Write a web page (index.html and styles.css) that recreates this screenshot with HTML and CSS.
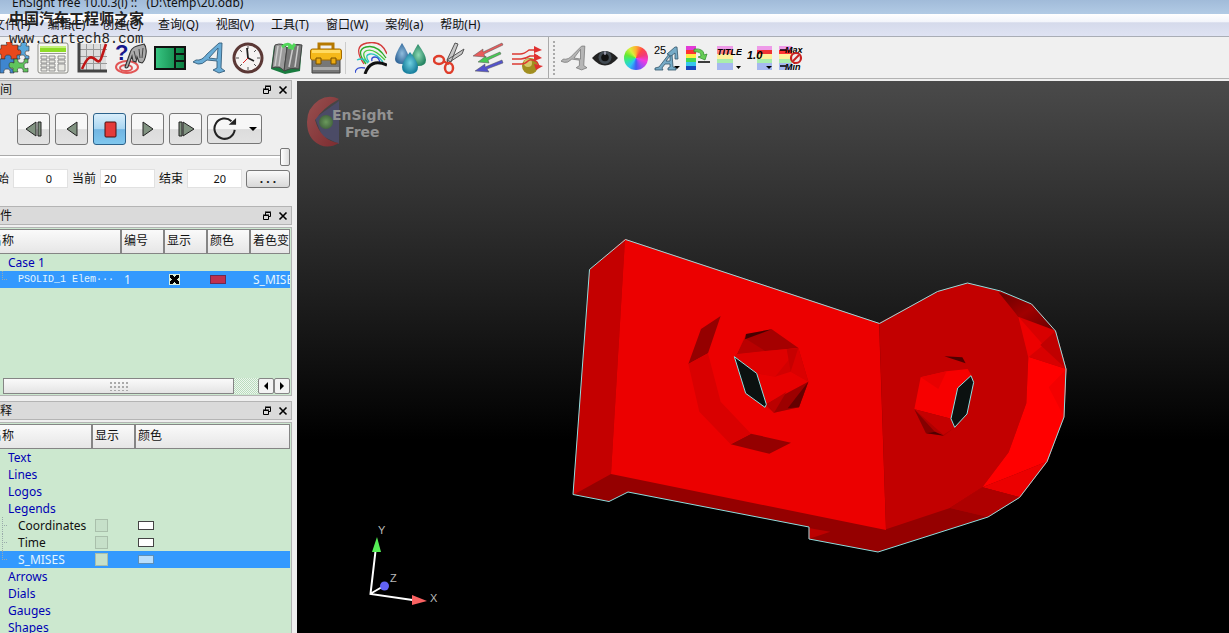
FILE: index.html
```html
<!DOCTYPE html>
<html lang="zh-CN">
<head>
<meta charset="utf-8">
<title>EnSight free 10.0.3(i)</title>
<link rel="stylesheet" href="styles.css">
</head>
<body>
<div class="app">
  <header class="titlebar">EnSight free 10.0.3(i) ::&nbsp;&nbsp; (D:\temp\20.odb)</header>
  <nav class="menubar">
    <button>文件(F)</button><button>编辑(E)</button><button>创建(C)</button><button>查询(Q)</button><button>视图(V)</button><button>工具(T)</button><button>窗口(W)</button><button>案例(a)</button><button>帮助(H)</button>
  </nav>
  <div class="toolbar">
    <div class="tools">
      <button aria-label="Parts"><svg viewBox="0 0 32 32"><g stroke="#333" stroke-width=".6"><path fill="#e8481c" d="M3 3h6q-2-4 2-4t3 4h6v5q4-2 4 2t-4 3v4h-5q2 4-2 4t-3-4H3v-5q-4 2-4-2t4-3z"/><path fill="#58a8dc" d="M20 4h3q-1-4 3-4t2 4h3v5q-4-1-4 2t4 3v3h-4q1-4-3-4t-2 4h-3v-4q4 1 4-2.500t-3-2.500z"/><path fill="#3f86cf" d="M2 17h5q-1-4 3-4t3 4h3v4q-4-1-4 3t4 3v4h-4q1-4-3-4t-3 4H2z"/><path fill="#5fc45c" d="M16 17h4q-1 4 3 4t3-4h4v4q-4-1-4 3t4 2v4h-5q1-4-3-4t-2 4h-5v-4q-4 1-4-3t5-2z"/></g></svg></button>
      <button aria-label="Calculator"><svg viewBox="0 0 32 32"><rect x="1" y="1" width="30" height="30" rx="2" fill="#f6f6f2" stroke="#8b8b86"/><path fill="#8fdc28" d="M3 4h26v6H3z"/><path fill="#c5f07c" d="M3 4h26v2H3z"/><path stroke="#999" d="M3 11.500h26"/><g fill="#e8e8e2" stroke="#888" stroke-width=".9"><path d="M4 14h6v3H4zM4 18h6v3H4zM4 22h6v3H4zM4 26h6v3H4zM12 14h6v3h-6zM12 18h6v3h-6zM12 22h6v3h-6zM12 26h6v3h-6zM21 14h7v3h-7zM21 18h7v3h-7zM21 22h7v7h-7z"/></g></svg></button>
      <button aria-label="Plot"><svg viewBox="0 0 32 32"><path fill="#ddd" d="M4 2h26v26H4z"/><path stroke="#999" d="M10.500 2v26M17.500 2v26M24.500 2v26M4 7.500h27M4 14.500h27M4 21.500h27"/><path fill="none" stroke="#444" stroke-width="3" d="M3 1v28h28"/><path fill="none" stroke="#c01515" stroke-width="2.600" d="M6 27q4-9 7-11t7 2 6-4l4-12"/></svg></button>
      <button aria-label="Query"><svg viewBox="0 0 32 32"><g fill="none" stroke="#e25555" stroke-width="2"><ellipse cx="12" cy="25" rx="11" ry="6"/><ellipse cx="11" cy="26" rx="6" ry="3"/></g><text x="0" y="18" class="glyph-query">?</text><path fill="#aaa" stroke="#333" stroke-width="1.100" d="M10 25l5-14q1-5 7-7l7-2q3 3 2 10t-4 9l-3-1-2-5-1 5-3-1-1-5-4 11q-2 2-3 0z"/><path fill="none" stroke="#444" d="M19 9l2 8M24 7l1 9M28 6l-1 10"/></svg></button>
      <button aria-label="Viewports"><svg viewBox="0 0 32 32"><defs><linearGradient id="gv"><stop stop-color="#39c784"/><stop offset="1" stop-color="#087a3d"/></linearGradient></defs><rect x="1" y="5" width="30" height="22" fill="url(#gv)" stroke="#111" stroke-width="2"/><path stroke="#111" stroke-width="2" d="M21 5v22M21 12h10M21 19h10"/></svg></button>
      <button aria-label="Annotation"><svg viewBox="0 0 32 32"><path fill="#69acd6" fill-rule="evenodd" stroke="#345d7c" stroke-width=".9" d="M0 20l3-2q6 1 11-6L26 1h3l-1 25 4 3-6 2-6-3 4-2v-7l-10-1q-5 5-9 4zM16 16l8 1 1-11z"/></svg></button>
      <button aria-label="Time"><svg viewBox="0 0 32 32"><circle cx="16" cy="16" r="14" fill="#f6f3f2" stroke="#5b3836" stroke-width="3"/><g stroke="#555"><path d="M16 4v3M16 25v3M4 16h3M25 16h3M8 8l2 2M22 22l2 2M24 8l-2 2M8 24l2-2"/></g><path fill="none" stroke="#222" stroke-width="1.800" d="M15 6l1 10 6 3"/><path stroke="#d22" d="M16 16l-5 5"/></svg></button>
      <button aria-label="Book"><svg viewBox="0 0 32 32"><path fill="#197b3f" d="M0 27l3-23 13 2 15-3-2 26-15 3z"/><path fill="#999" stroke="#444" d="M4 3q8-3 12 3l-3 23Q9 23 1 26z"/><path fill="#777" stroke="#444" d="M16 6q7-5 15-3l-3 24q-8-2-15 2z"/><path stroke="#ccc" stroke-width="1.500" d="M7 4L4 24M11 4L8 24M22 5l-4 20M27 4l-3 21"/><path fill="none" stroke="#51d659" stroke-width="3" d="M11 5q7-6 10 1l-4-1m4 1l3-4"/></svg></button>
      <button aria-label="Toolbox"><svg viewBox="0 0 32 32"><path fill="none" stroke="#b67900" stroke-width="3" d="M9 8V2h14v6"/><path fill="#777" stroke="#444" d="M2 17h28v14H2z"/><path fill="#aaa" d="M3 25h26v3H3z"/><rect x=".5" y="7" width="31" height="11" rx="2" fill="#f5b91a" stroke="#a46b00"/><path fill="#ffda62" d="M2 8h28v3H2z"/><path fill="#ecaa11" stroke="#765000" d="M6 16h5v6H6zM21 16h5v6h-5z"/></svg></button>
      <i class="separator"></i>
      <button aria-label="Contours"><svg viewBox="0 0 32 32"><g fill="none" stroke-width="1.300"><path stroke="#d43a3a" d="M9 22Q-3 4 12 1t20 11"/><path stroke="#29a929" d="M11 22Q0 8 11 5t20 11"/><path stroke="#49ca3e" d="M13 21Q5 11 12 8.500T30 18"/><path stroke="#28c4bf" d="M14 20Q9 13 15 12t13 8M2 18q6-3 11 3"/><path stroke="#334cd0" d="M17 19q-1-4 3-4t5 6M0 31q1-7 10-5"/><path stroke="#111" stroke-width="3" d="M10 32q5-16 22-9"/></g></svg></button>
      <button aria-label="Isosurfaces"><svg viewBox="0 0 32 32"><defs><radialGradient id="d1"><stop stop-color="#90bddd"/><stop offset="1" stop-color="#356a9c"/></radialGradient><radialGradient id="d2"><stop stop-color="#8cd9b3"/><stop offset="1" stop-color="#268563"/></radialGradient><radialGradient id="d3"><stop stop-color="#70d0e0"/><stop offset="1" stop-color="#187f9d"/></radialGradient></defs><path fill="url(#d1)" d="M8 1q7 11 7 16 0 5-7 5t-7-5Q1 12 8 1z"/><path fill="url(#d2)" d="M24 2q8 11 8 16 0 6-8 6t-7-6q0-5 7-16z"/><path fill="url(#d3)" d="M16 10q8 10 8 15 0 7-8 7t-8-7q0-5 8-15z"/></svg></button>
      <button aria-label="Clip"><svg viewBox="0 0 32 32"><path fill="#c7c7c7" stroke="#555" d="M14 18L22 1l3 1-7 18zM14 18l17-11-2 5-14 9z"/><g fill="none" stroke="#df3d2b" stroke-width="2.500"><ellipse cx="6" cy="18" rx="5" ry="4"/><ellipse cx="16" cy="26" rx="4" ry="5"/><path d="M10 19l6 3"/></g></svg></button>
      <button aria-label="Vectors"><svg viewBox="0 0 32 32"><g stroke="#555" stroke-width=".5"><path fill="#e75c5c" d="M1 14l10-7v3L30 1l1 2-19 9 1 3z"/><path fill="#48c955" d="M6 20l8-6v2l14-6 1 2-13 6 1 3z"/><path fill="#5353cb" d="M3 29l10-7v3l17-7 1 3-16 6 2 3z"/></g></svg></button>
      <button aria-label="Particle traces"><svg viewBox="0 0 32 32"><circle cx="19" cy="24" r="8" fill="#a18e20"/><circle cx="17" cy="21" r="4" fill="#d4c86a"/><g fill="none" stroke="#dc3a32" stroke-width="1.500"><path d="M1 12h8q4 0 9-4h9M1 17h9q4 0 9-3h8M1 22h9q4 0 7-3t9 1l2 4"/></g><path fill="#e03030" d="M23 4l8 4-8 3zM23 11l8 5-8 3zM23 22l9 2-7 4z"/></svg></button>
    </div>
    <div class="formats">
      <button aria-label="Text"><svg viewBox="0 0 24 24"><path fill="#b5b5b5" fill-rule="evenodd" stroke="#777" stroke-width=".7" d="M0 15l2-2q5 1 9-4l8-8h3l-1 18 3 2-5 2-5-2 3-2v-5l-7-1q-4 4-7 3zm12-3l6 1V4z"/></svg></button>
      <button aria-label="Visibility"><svg viewBox="0 0 24 24"><path fill="#222" d="M0 12Q12-1 24 12 12 26 0 12z"/><circle cx="12" cy="11.500" r="6" fill="#414a52"/><circle cx="12" cy="11.500" r="3.500" fill="#111"/><path fill="#99a" d="M11 6h2v3h-2z"/></svg></button>
      <button aria-label="Color"><i class="wheel"></i></button>
      <button aria-label="Font size"><svg viewBox="0 0 26 26"><text x="0" y="9" class="glyph-small">25</text><path fill="#76abc7" fill-rule="evenodd" stroke="#34566a" stroke-width=".8" d="M1 25v-2l4-1 10-13h3l1 13 3 1v2h-8v-2l2-1v-3h-5l-3 4 1 2zm11-9h4v-5z"/><path fill="#76abc7" stroke="#34566a" stroke-width=".8" d="M13 9l8-7h2l1 12h-3V8l-4 3z"/><path d="M20 21h6l-3 3z"/></svg></button>
      <button aria-label="Legend move"><svg viewBox="0 0 26 26"><path fill="#e33bd6" d="M1 1h10v4H1z"/><path fill="#f33" d="M1 5h10v4H1z"/><path fill="#ffef42" d="M1 9h10v4H1z"/><path fill="#42d953" d="M1 13h10v4H1z"/><path fill="#36c7ec" d="M1 17h10v4H1z"/><path fill="#1549bd" d="M1 21h10v4H1z"/><path fill="#67cd56" stroke="#2c8a2a" stroke-width=".7" d="M9 4q10-1 10 6l3-1-2 6-7-3 3-1q0-5-7-4z"/><path stroke="#000" stroke-width="1.500" d="M13 17h12"/></svg></button>
      <button aria-label="Legend title"><svg viewBox="0 0 26 26"><path fill="#ee9ae8" d="M1 1h16v4H1z"/><path fill="#ff8585" d="M1 5h16v4H1z"/><path fill="#fff19c" d="M1 9h16v5H1z"/><path fill="#a9edac" d="M1 14h16v4H1z"/><path fill="#a6b8f0" d="M1 18h16v7H1z"/><text x="1" y="10" class="glyph-bold">TITLE</text><path d="M20 21h5l-2.500 3z"/></svg></button>
      <button aria-label="Legend values"><svg viewBox="0 0 26 26"><path fill="#ee9ae8" d="M10 1h15v4H10z"/><path fill="#e33" d="M10 5h15v4H10z"/><path fill="#fff19c" d="M10 9h15v5H10z"/><path fill="#a9edac" d="M10 14h15v4H10z"/><path fill="#a6b8f0" d="M10 18h15v7H10z"/><text x="0" y="14" class="glyph-value">1.0</text><path d="M19 21h6l-3 3z"/></svg></button>
      <button aria-label="Legend range"><svg viewBox="0 0 26 26"><path fill="#ee9ae8" d="M1 1h13v4H1z"/><path fill="#f33" d="M1 5h13v4H1z"/><path fill="#fff19c" d="M1 9h13v5H1z"/><path fill="#a9edac" d="M1 14h13v4H1z"/><path fill="#a6b8f0" d="M1 18h13v7H1z"/><path stroke="#000" stroke-width="1.500" d="M2 5h6M2 21h6"/><text x="7" y="8" class="glyph-range">Max</text><text x="7" y="25" class="glyph-range">Min</text><circle cx="18" cy="13" r="5" fill="#eee" stroke="#c92121" stroke-width="2.200"/><path stroke="#c92121" stroke-width="2" d="M15 16l6-6"/></svg></button>
    </div>
  </div>

  <main class="workspace">
    <aside class="dock">
      <section>
        <h2 class="panel-title"><span>时间</span><button aria-label="Float"><svg viewBox="0 0 10 10"><path fill="none" stroke="#000" d="M3.500 4V1.500h5v4H6M1.500 4.500h5v4h-5zM3 1h6M1 4h6"/></svg></button><button aria-label="Close"><svg viewBox="0 0 10 10"><path stroke="#000" stroke-width="1.600" d="M1.500 1.500l7 7M8.500 1.500l-7 7"/></svg></button></h2>
        <div class="time">
          <div class="player">
            <button aria-label="Step back"><svg viewBox="0 0 18 18"><path fill="#819381" stroke="#222" d="M11 2v14L1 9z"/><path fill="#819381" stroke="#222" d="M13 2h3v14h-3z"/></svg></button>
            <button aria-label="Play back"><svg viewBox="0 0 18 18"><path fill="#819381" stroke="#222" d="M14 2v14L4 9z"/></svg></button>
            <button class="active" aria-label="Stop"><svg viewBox="0 0 18 18"><rect x="4" y="2" width="11" height="15" rx="1" fill="#e43a3a" stroke="#4a1111"/></svg></button>
            <button aria-label="Play"><svg viewBox="0 0 18 18"><path fill="#819381" stroke="#222" d="M4 2v14l10-7z"/></svg></button>
            <button aria-label="Step forward"><svg viewBox="0 0 18 18"><path fill="#819381" stroke="#222" d="M6 2v14l11-7z"/><path fill="#819381" stroke="#222" d="M2 2h3v14H2z"/></svg></button>
            <button class="loop" aria-label="Loop"><svg class="loop-icon" viewBox="0 0 26 26"><path fill="none" stroke="#222" stroke-width="2.200" d="M23.500 14A11 11 0 1 1 20 4.500"/><path fill="#222" d="M17 8.500h8V1z"/></svg><svg class="caret" viewBox="0 0 8 4"><path d="M0 0h8L4 4z"/></svg></button>
          </div>
          <input class="slider" type="range" min="0" max="20" value="20" aria-label="Time step">
          <div class="range">
            <label for="start">开始</label><input id="start" class="right" value="0">
            <label for="current">当前</label><input id="current" value="20">
            <label for="end">结束</label><input id="end" class="right" value="20">
            <button>. . .</button>
          </div>
        </div>
      </section>

      <section>
        <h2 class="panel-title"><span>部件</span><button aria-label="Float"><svg viewBox="0 0 10 10"><path fill="none" stroke="#000" d="M3.500 4V1.500h5v4H6M1.500 4.500h5v4h-5zM3 1h6M1 4h6"/></svg></button><button aria-label="Close"><svg viewBox="0 0 10 10"><path stroke="#000" stroke-width="1.600" d="M1.500 1.500l7 7M8.500 1.500l-7 7"/></svg></button></h2>
        <div class="frame parts">
          <table>
            <colgroup><col class="name-wide"><col class="narrow"><col class="narrow"><col class="narrow"><col></colgroup>
            <thead><tr><th>名称</th><th>编号</th><th>显示</th><th>颜色</th><th>着色变量</th></tr></thead>
            <tbody>
              <tr><td class="group" colspan="5">Case 1</td></tr>
              <tr class="selected"><td class="child last mono">PSOLID_1 Elem···</td><td>1</td><td><input class="check" type="checkbox" checked aria-label="显示 PSOLID_1"></td><td><i class="swatch crimson"></i></td><td>S_MISES</td></tr>
            </tbody>
          </table>
          <div class="scroll">
            <span class="thumb"><i></i></span><span class="trough"></span>
            <button aria-label="Scroll left"><svg viewBox="0 0 6 8"><path d="M5 0v8L1 4z"/></svg></button><button aria-label="Scroll right"><svg viewBox="0 0 6 8"><path d="M1 0v8l4-4z"/></svg></button>
          </div>
        </div>
      </section>

      <section class="annotations">
        <h2 class="panel-title"><span>注释</span><button aria-label="Float"><svg viewBox="0 0 10 10"><path fill="none" stroke="#000" d="M3.500 4V1.500h5v4H6M1.500 4.500h5v4h-5zM3 1h6M1 4h6"/></svg></button><button aria-label="Close"><svg viewBox="0 0 10 10"><path stroke="#000" stroke-width="1.600" d="M1.500 1.500l7 7M8.500 1.500l-7 7"/></svg></button></h2>
        <div class="frame">
          <table>
            <colgroup><col class="name"><col class="narrow"><col></colgroup>
            <thead><tr><th>名称</th><th>显示</th><th>颜色</th></tr></thead>
            <tbody>
              <tr><td class="group" colspan="3">Text</td></tr>
              <tr><td class="group" colspan="3">Lines</td></tr>
              <tr><td class="group" colspan="3">Logos</td></tr>
              <tr><td class="group" colspan="3">Legends</td></tr>
              <tr><td class="child">Coordinates</td><td><input class="check" type="checkbox" aria-label="显示 Coordinates"></td><td><i class="swatch"></i></td></tr>
              <tr><td class="child">Time</td><td><input class="check" type="checkbox" aria-label="显示 Time"></td><td><i class="swatch"></i></td></tr>
              <tr class="selected"><td class="child last">S_MISES</td><td><input class="check" type="checkbox" aria-label="显示 S_MISES"></td><td><i class="swatch sky"></i></td></tr>
              <tr><td class="group" colspan="3">Arrows</td></tr>
              <tr><td class="group" colspan="3">Dials</td></tr>
              <tr><td class="group" colspan="3">Gauges</td></tr>
              <tr><td class="group" colspan="3">Shapes</td></tr>
            </tbody>
          </table>
        </div>
      </section>
    </aside>

    <div class="viewport">
      <svg class="scene" viewBox="297 81 932 552">
        <defs>
          <radialGradient id="ball"><stop stop-color="#6b9a5c"/><stop offset="1" stop-color="#44663f"/></radialGradient>
          <linearGradient id="bowl" x2="1" y2="1"><stop stop-color="#985050"/><stop offset="1" stop-color="#7c2c30"/></linearGradient>
          <linearGradient id="rim" x2="1" y2="1"><stop stop-color="#650000"/><stop offset=".5" stop-color="#a00000"/><stop offset="1" stop-color="#650000"/></linearGradient>
        </defs>
        <g>
          <path fill="#4b4b66" d="M339 101l-24 17 7 18 17 8z"/>
          <path fill="url(#bowl)" d="M339 99q-10-5-20 1-12 8-12 22 0 17 13 23 9 4 19-2-18-2-24-23 8-12 24-21z"/>
          <circle cx="326" cy="122" r="7" fill="url(#ball)"/>
          <text class="brand" x="332" y="120">EnSight</text><text class="brand" x="345" y="137">Free</text>
        </g>
        <path fill="#950000" d="M589.500 269.500L625 239l254 84 59-31.500 30-8.500 33 8 31 13 24 27 10.500 38-2 48-17 44.500-27.500 36L988 517l-110 35-69-13v-12l-181-35-19 9.500-36-7z"/>
        <path fill="#c40000" d="M589.500 269.500L625 239l-14 235-38 21z"/>
        <path fill="#ec0000" d="M625 239l254 84 7 207-275-56z"/>
        <g transform="translate(560 230) scale(.333333)">
          <path fill="#950000" d="M482 258l-59 39-38 105 59-32zM573 611l120 27-65 33-116-28z"/>
          <path fill="#d90000" d="M385 402l59-32 38 145 91 96-61 32-94-98z"/>
          <path fill="#d20000" d="M558 312l77-14 80 56 30 101-28 77-75 16-23-18-29-100-67-50 9-10z"/>
          <path fill="#a50000" d="M555 325l80-27 80 56-183 18z"/>
          <path fill="#b90000" d="M555 325l60 38-83 9z"/>
          <path fill="#460000" d="M558 312l77-14-80 30z"/>
          <path fill="#df0000" d="M615 363l100-9-70 86-58-11-64-49 9-8z"/>
          <path fill="#c60000" d="M680 358l35-4 30 101-53-30z"/>
          <path fill="#da0000" d="M715 354l30 101-53-30z"/>
          <path fill="#e80000" d="M645 440l47-15 53 30-126 68-29-93z"/>
          <path fill="#9c0000" d="M619 523l126-68-28 77-75 16z"/>
          <path fill="#bb0000" d="M619 523l60-37-37 62z"/>
          <path fill="#650000" d="M745 455l-28 77-34 3z"/>
          <path class="hole" d="M523 380l67 50 29 93-4 9-58-42z"/>
        </g>
        <g transform="translate(800 270) scale(.333333)">
          <path fill="#c20000" d="M238 158l175-94 90-26 96 26 56 76 30 118-6 142-53 147-79 105-97 62-192 64z"/>
          <path fill="url(#rim)" d="M595 66l102 37 70 79-112-42z"/>
          <path fill="#d80000" d="M655 140l112 42 32 115-114-37z"/>
          <path fill="#ed0000" d="M655 140l75 85-45 37z"/>
          <path fill="#c00000" d="M767 182l32 115-78-72z"/>
          <path fill="#ff0000" d="M685 260l114 37-7 143-49 134-196 78 79-105 53-147z"/>
          <path fill="#f30000" d="M799 297l-7 143-46-88z"/>
          <path fill="#ec0000" d="M547 652l196-78-83 108z"/>
          <path fill="#ae0000" d="M547 652l113 30-95 59-115-27z"/>
          <path fill="#c20000" d="M547 652l-72 46 90 43z"/>
          <path fill="#ae0000" d="M450 714l97-62 113 30-95 59z"/>
          <path fill="#bd0000" d="M26 774v33l65-22z"/>
          <path fill="#500000" d="M433 259l54 3 10 18z"/>
          <path fill="#f70000" d="M362 322l78-18 63-7 12 20-42 37-18 93-112-29z"/>
          <path fill="#e80000" d="M362 322l78-18-25 53z"/>
          <path fill="#ae0000" d="M343 418l110 28 12 26-33 25-54-7z"/>
          <path fill="#c50000" d="M343 418l110 28 12 26-35 22z"/>
          <path fill="#840000" d="M343 418l62 68-27 4z"/>
          <path fill="#500000" d="M378 490l27-5 27 12z"/>
          <path class="hole" d="M513 317l8 20-20 95-37 40-11-26 20-92z"/>
        </g>
        <path class="outline" d="M589.500 269.500L625.500 239.500l254 84 58-32 30-8.500 33 8 31 13 24 27 10.500 38-2 48-17 44.500-27.500 36L988 517l-110 35-69-13v-12l-181-35-19 9.500-36-7z"/>
        <g class="axes">
          <path d="M375.500 551l-5 43 42 6M370 594l12-7"/>
          <path class="y" d="M377 537l4 15h-9z"/><path class="x" d="M412 595l15 6-15 4z"/><circle cx="384.500" cy="586" r="4.500"/>
          <text x="378" y="534">Y</text><text x="390" y="582">Z</text><text x="430" y="602">X</text>
        </g>
      </svg>
    </div>
  </main>
</div>
<div class="watermark"><p class="club">中国汽车工程师之家</p><p class="site">www.cartech8.com</p></div>
</body>
</html>
```
FILE: styles.css
```css
* { box-sizing: border-box; }
body {
  margin: 0;
  height: 100vh;
  overflow: hidden;
  background: #efefef;
  color: #111;
  font: 12px/17px "Noto Sans", "Noto Sans CJK SC", sans-serif;
}
button, input { font: inherit; color: inherit; }
button { padding: 0; border: 0; background: none; }
svg { display: block; }

/* The window runs past the left edge of the screen. */
.app {
  display: flex;
  flex-direction: column;
  height: 100vh;
  margin-left: -16px;
}
.titlebar {
  flex: none;
  height: 14px;
  padding-left: 28px;
  line-height: 6px;
  white-space: pre;
  background: linear-gradient(#a1bbd9, #b2cbe5);
}
.menubar {
  display: flex;
  flex: none;
  gap: 17px;
  height: 23px;
  padding-left: 9px;
  border-bottom: 1px solid #a9adb5;
  background: linear-gradient(#fff 0, #f3f5fb 35%, #d5daeb 40%, #dfe3f3 100%);
}
.menubar button { height: 21px; }
.toolbar {
  display: flex;
  flex: none;
  height: 42px;
  margin-bottom: 1px;
  border-bottom: 1px solid #b2b2b2;
  background: #f0f0f0;
}
.tools, .formats { display: flex; align-items: center; }
.tools { padding: 0 2px 0 10px; border-right: 1px solid #aaa; }
.tools button { width: 39px; }
.tools svg { width: 32px; height: 32px; margin: auto; }
.separator { width: 6px; height: 32px; border-left: 1px solid #ccc; }
.formats::before {
  content: "";
  width: 2px;
  height: 34px;
  margin: 0 3px 0 4px;
  background: repeating-linear-gradient(#aaa 0 2px, transparent 2px 4px);
}
.formats button { width: 31px; }
.formats svg { width: 26px; height: 26px; margin: auto; }
.wheel {
  display: block;
  width: 24px;
  height: 24px;
  margin: auto;
  border-radius: 50%;
  background: conic-gradient(#ffb02e, #ff4848, #f13a7a, #f13ae0, #a24cf2, #3f5cf4, #2ec4f5, #30e69b, #66ea30, #d8f03c, #ffb02e);
}
.glyph-query { font: bold 22px "Liberation Sans", sans-serif; fill: #17178c; }
.glyph-small { font: 11px "Liberation Sans", sans-serif; }
.glyph-bold { font: italic bold 9px "Liberation Sans", sans-serif; }
.glyph-value { font: italic bold 11px "Liberation Sans", sans-serif; }
.glyph-range { font: italic bold 9px "Liberation Sans", sans-serif; }

.workspace { display: flex; flex: 1; min-height: 0; }
.dock {
  display: flex;
  flex: none;
  flex-direction: column;
  width: 308px;
  margin-right: 5px;
  overflow: hidden;
}
.panel-title {
  display: flex;
  align-items: center;
  gap: 6px;
  height: 19px;
  margin: 0;
  padding: 0 3px;
  border: 1px solid #b4b4b4;
  background: #dadada;
  font-size: 12px;
  font-weight: 400;
}
.panel-title span { flex: 1; }
.panel-title svg { width: 10px; height: 10px; }

.time { height: 107px; padding: 14px 2px 0 0; }
.player { display: flex; align-items: center; gap: 5px; padding-left: 33px; }
.player button {
  display: flex;
  align-items: center;
  justify-content: center;
  width: 33px;
  height: 32px;
  border: 1px solid #777;
  border-radius: 3px;
  background: linear-gradient(#f7f7f7 50%, #dcdcdc 52%, #e2e2e2);
}
.player svg { width: 18px; height: 18px; }
.player .active { border-color: #2c628b; background: linear-gradient(#d9eefb, #a8d5f1 50%, #72b5e2 52%, #7fc7ee); }
.player .loop { gap: 12px; width: 55px; height: 30px; }
.player .loop-icon { width: 24px; height: 24px; }
.player .caret { width: 8px; height: 4px; }
.slider {
  display: block;
  width: 100%;
  height: 18px;
  margin: 3px 0;
  appearance: none;
  background: linear-gradient(transparent 7px, #aaa 7px 8px, #fff 8px 10px, transparent 10px);
}
.slider::-webkit-slider-thumb {
  width: 10px;
  height: 18px;
  appearance: none;
  border: 1px solid #777;
  border-radius: 2px;
  background: linear-gradient(90deg, #fff, #ddd);
}
.range { display: flex; align-items: center; gap: 4px; padding-left: 1px; }
.range label { flex: none; }
.range input {
  width: 55px;
  height: 19px;
  padding: 0 3px;
  border: 1px solid #e1e1e1;
  background: #fff;
  font-size: 11px;
}
.range .right { padding-right: 15px; text-align: right; }
.range button {
  width: 44px;
  height: 18px;
  border: 1px solid #777;
  border-radius: 3px;
  background: linear-gradient(#fafafa, #d8d8d8);
  font-weight: 700;
  line-height: 12px;
}

.frame {
  margin-top: 2px;
  padding: 1px 1px 1px 0;
  border: solid #b4b4b4;
  border-width: 1px 1px 1px 0;
  background: #cce8cf;
}
.parts { display: flex; flex-direction: column; height: 169px; margin-bottom: 5px; }
.annotations { display: flex; flex: 1; flex-direction: column; min-height: 0; }
.annotations .panel-title { flex: none; }
.annotations .frame { flex: 1; min-height: 0; border-bottom: 0; overflow: hidden; }
table { width: 100%; table-layout: fixed; border-collapse: separate; border-spacing: 0; }
.name-wide { width: 138px; }
.name { width: 109px; }
.narrow { width: 43px; }
th {
  height: 25px;
  padding: 0 2px 3px;
  border: solid #858585;
  border-width: 1px 2px 1px 0;
  background: linear-gradient(#fafafa, #e6e6e6);
  font-weight: 400;
  text-align: left;
  white-space: nowrap;
  overflow: hidden;
}
th:first-child { padding-left: 6px; }
th:last-child { border-right-width: 1px; }
td { height: 17px; padding: 0 2px; line-height: 17px; white-space: nowrap; overflow: hidden; }
.group { padding-left: 24px; color: #0000b4; }
.child {
  padding-left: 34px;
  background: repeating-linear-gradient(#9aa 0 1px, transparent 1px 2px) 18px 0 / 1px 100% no-repeat, repeating-linear-gradient(90deg, #9aa 0 1px, transparent 1px 2px) 18px 8px / 5px 1px no-repeat;
}
.last { background-size: 1px 8px, 5px 1px; }
.mono { font-family: "Liberation Mono", "DejaVu Sans Mono", monospace; font-size: 10px; }
.selected { background: #3399fe; color: #e3f6ff; }
.check {
  display: block;
  width: 13px;
  height: 13px;
  margin: 0;
  appearance: none;
  border: 1px solid #a9bfab;
  background: #c6e0c9;
}
.check:checked {
  width: 11px;
  height: 11px;
  margin-left: 2px;
  border: 1px solid #d9efdc;
  background:
    linear-gradient(45deg, transparent 36%, #000 36% 64%, transparent 64%),
    linear-gradient(135deg, transparent 36%, #000 36% 64%, transparent 64%),
    #d9efdc;
}
.swatch { display: block; width: 16px; height: 9px; border: 1px solid #444; background: #fff; }
.crimson { border-color: #6b2a55; background: #c0304f; }
.sky { border-color: #5d8fb8; background: #b9defb; }

.scroll { display: flex; height: 16px; margin-top: auto; }
.thumb {
  display: flex;
  flex: 1;
  align-items: center;
  justify-content: center;
  margin-left: 19px;
  border: 1px solid #858585;
  background: linear-gradient(#fafafa, #e4e4e4);
}
.thumb i { width: 19px; height: 10px; background: radial-gradient(#aaa 1px, transparent 1px) 0 0 / 4px 4px; }
.trough { width: 24px; background: repeating-conic-gradient(#eef6ef 0 25%, #b9ddbd 0 50%) 0 0 / 2px 2px; }
.scroll button {
  display: flex;
  align-items: center;
  justify-content: center;
  width: 16px;
  border: 1px solid #858585;
  border-radius: 2px;
  background: #f3f3f3;
}
.scroll svg { width: 6px; height: 8px; }

.viewport {
  flex: 1;
  min-width: 0;
  margin-top: 1px;
  background: linear-gradient(#4a4a4a, #000 65%);
}
.scene { width: 100%; height: 100%; }
.brand { font: bold 14px "DejaVu Sans", sans-serif; fill: #929292; }
.outline { fill: none; stroke: #8fdede; stroke-width: 1; }
.hole { fill: #0b1110; stroke: #8fdede; stroke-width: 3; }
.axes { fill: #6262f5; }
.axes path { fill: none; stroke: #fff; stroke-width: 2; }
.axes .x { fill: #fa6262; stroke: none; }
.axes .y { fill: #55ee55; stroke: none; }
.axes text { font: 11px "Liberation Sans", sans-serif; fill: #bbb; }

.watermark { position: absolute; top: 7px; left: 9px; color: #222; pointer-events: none; }
.watermark p { margin: 0; }
.club { font: 700 15px/21px "Noto Sans CJK SC", sans-serif; }
.site { font: 14px/22px "Liberation Mono", monospace; }
```
